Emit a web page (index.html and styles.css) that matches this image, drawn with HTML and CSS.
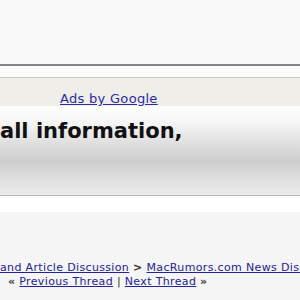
FILE: index.html
```html
<!DOCTYPE html>
<html>
<head>
<meta charset="utf-8">
<link rel="stylesheet" href="styles.css">
</head>
<body>
<div class="top"></div>
<div class="gap"></div>
<div class="ads"><a href="#" class="ads-link">Ads by Google</a></div>
<div class="banner"><h1 class="headline">all information,</h1></div>
<div class="spacer"></div>
<div class="nav">
  <div class="crumbs"><a href="#">and Article Discussion</a> <b class="sep">&gt;</b> <a href="#">MacRumors.com News Discussion</a></div>
  <div class="threads"><span class="q">&laquo;</span> <a href="#">Previous Thread</a> | <a href="#">Next Thread</a> <span class="q">&raquo;</span></div>
</div>
</body>
</html>
```
FILE: styles.css
```css
html, body {
  margin: 0;
  padding: 0;
  width: 300px;
  height: 300px;
  overflow: hidden;
  background: #f5f5f5;
}
.top {
  height: 64px;
  background: #f9f9f9;
  border-bottom: 2px solid #858585;
}
.gap {
  height: 11px;
  background: #fdfdfd;
  border-bottom: 1px solid #c9c9c9;
}
.ads {
  height: 28px;
  background: #efeee9;
  padding-left: 60px;
  box-sizing: border-box;
  padding-top: 13px;
  font-family: "DejaVu Sans", Verdana, sans-serif;
  font-size: 13px;
  line-height: 15px;
  letter-spacing: 0.3px;
  white-space: nowrap;
}
.ads-link {
  color: #2a2aa6;
}
.banner {
  height: 90px;
  box-sizing: border-box;
  border-bottom: 1px solid #b9b9b9;
  background: linear-gradient(to bottom, #ffffff 0%, #f4f4f4 20%, #dcdcdc 45%, #cdcdcd 62%, #dedede 80%, #ebebeb 100%);
  overflow: hidden;
}
.headline {
  margin: 0;
  padding-top: 12px;
  font-family: "DejaVu Sans", Verdana, sans-serif;
  font-weight: bold;
  font-size: 21px;
  line-height: 26px;
  color: #111;
  white-space: nowrap;
}
.spacer {
  height: 16px;
  background: #ffffff;
}
.nav {
  padding-top: 49px;
  font-family: "DejaVu Sans", Verdana, sans-serif;
  font-size: 11px;
  line-height: 14px;
  letter-spacing: 0.35px;
  color: #333;
  white-space: nowrap;
  overflow: hidden;
}
.nav a {
  color: #22229c;
}
.sep {
  font-weight: bold;
  color: #333;
}
.threads {
  padding-left: 8px;
}
.q {
  font-weight: bold;
}
```
